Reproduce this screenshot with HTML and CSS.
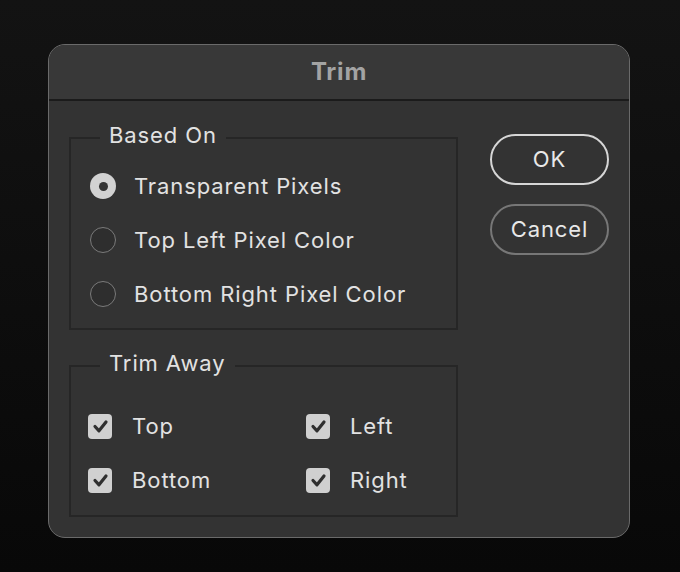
FILE: index.html
```html
<!DOCTYPE html>
<html>
<head>
<meta charset="utf-8">
<link rel="stylesheet" href="styles.css">
</head>
<body>
<div class="dialog">
  <div class="titlebar">Trim</div>
  <div class="content">
    <div class="groups">
      <fieldset class="group based">
        <legend>Based On</legend>
        <div class="radio-list">
          <div class="row"><span class="radio checked"></span><span class="label">Transparent Pixels</span></div>
          <div class="row"><span class="radio"></span><span class="label">Top Left Pixel Color</span></div>
          <div class="row"><span class="radio"></span><span class="label">Bottom Right Pixel Color</span></div>
        </div>
      </fieldset>
      <fieldset class="group away">
        <legend>Trim Away</legend>
        <div class="check-grid">
          <div class="row"><span class="check"><svg viewBox="0 0 24 24" width="24" height="24"><path d="M7 12.5 L11 16.8 L18 8" fill="none" stroke="#2f2f2f" stroke-width="3.2" stroke-linecap="round" stroke-linejoin="round"/></svg></span><span class="label">Top</span></div>
          <div class="row"><span class="check"><svg viewBox="0 0 24 24" width="24" height="24"><path d="M7 12.5 L11 16.8 L18 8" fill="none" stroke="#2f2f2f" stroke-width="3.2" stroke-linecap="round" stroke-linejoin="round"/></svg></span><span class="label">Left</span></div>
          <div class="row"><span class="check"><svg viewBox="0 0 24 24" width="24" height="24"><path d="M7 12.5 L11 16.8 L18 8" fill="none" stroke="#2f2f2f" stroke-width="3.2" stroke-linecap="round" stroke-linejoin="round"/></svg></span><span class="label">Bottom</span></div>
          <div class="row"><span class="check"><svg viewBox="0 0 24 24" width="24" height="24"><path d="M7 12.5 L11 16.8 L18 8" fill="none" stroke="#2f2f2f" stroke-width="3.2" stroke-linecap="round" stroke-linejoin="round"/></svg></span><span class="label">Right</span></div>
        </div>
      </fieldset>
    </div>
    <div class="buttons">
      <button class="btn primary">OK</button>
      <button class="btn">Cancel</button>
    </div>
  </div>
</div>
</body>
</html>
```

FILE: styles.css
```css
html, body {
  margin: 0;
  padding: 0;
}
body {
  width: 680px;
  height: 572px;
  background: linear-gradient(#131313, #080808);
  font-family: "Inter", "Liberation Sans", sans-serif;
  color: #e2e2e2;
  padding-top: 44px;
  padding-left: 48px;
  box-sizing: border-box;
  overflow: hidden;
}
.dialog {
  width: 582px;
  height: 494px;
  box-sizing: border-box;
  border: 1px solid #6a6a6a;
  border-radius: 17px;
  background: #333333;
  overflow: hidden;
}
.titlebar {
  height: 56px;
  padding-bottom: 2px;
  background: #383838;
  border-bottom: 2px solid #1b1b1b;
  display: flex;
  align-items: center;
  justify-content: center;
  font-size: 24px;
  letter-spacing: 0.8px;
  font-weight: 700;
  color: #a3a3a3;
  box-sizing: border-box;
}
.content {
  display: flex;
  padding: 21px 20px 0 20px;
}
.groups {
  display: flex;
  flex-direction: column;
  gap: 20px;
  width: 389px;
}
.group {
  margin: 0;
  padding: 0;
  border: 2px solid #262626;
  min-width: 0;
}
.group legend {
  margin-left: 29px;
  padding: 0 9px 5px 9px;
  font-size: 22px;
  letter-spacing: 0.9px;
  line-height: 26px;
  color: #e2e2e2;
}
.label {
  font-size: 22px;
  letter-spacing: 0.9px;
  line-height: 26px;
}
.radio-list {
  display: flex;
  flex-direction: column;
  gap: 28px;
  padding: 20px 0 21px 19px;
}
.row {
  display: flex;
  align-items: center;
}
.radio {
  width: 26px;
  height: 26px;
  border-radius: 50%;
  box-sizing: border-box;
  border: 1.5px solid #7a7a7a;
  background: #2e2e2e;
  margin-right: 18px;
  display: flex;
  align-items: center;
  justify-content: center;
}
.radio.checked {
  border: none;
  background: #d2d2d2;
}
.radio.checked::after {
  content: "";
  width: 9px;
  height: 9px;
  border-radius: 50%;
  background: #333;
}
.check-grid {
  display: grid;
  grid-template-columns: 218px 1fr;
  row-gap: 28px;
  padding: 32px 0 22px 17px;
}
.check {
  width: 24px;
  height: 25px;
  border-radius: 4px;
  background: #d0d0d0;
  margin-right: 20px;
  display: flex;
  align-items: center;
  justify-content: center;
}
.check svg {
  display: block;
}
.buttons {
  display: flex;
  flex-direction: column;
  gap: 19px;
  margin-left: 32px;
  padding-top: 12px;
}
.btn {
  width: 119px;
  height: 51px;
  border-radius: 26px;
  background: transparent;
  border: 2px solid #777;
  color: #e8e8e8;
  font-family: "Inter", "Liberation Sans", sans-serif;
  font-size: 22px;
  letter-spacing: 0.9px;
  padding: 0 0 1px 0;
}
.btn.primary {
  border-color: #d6d6d6;
}
```
